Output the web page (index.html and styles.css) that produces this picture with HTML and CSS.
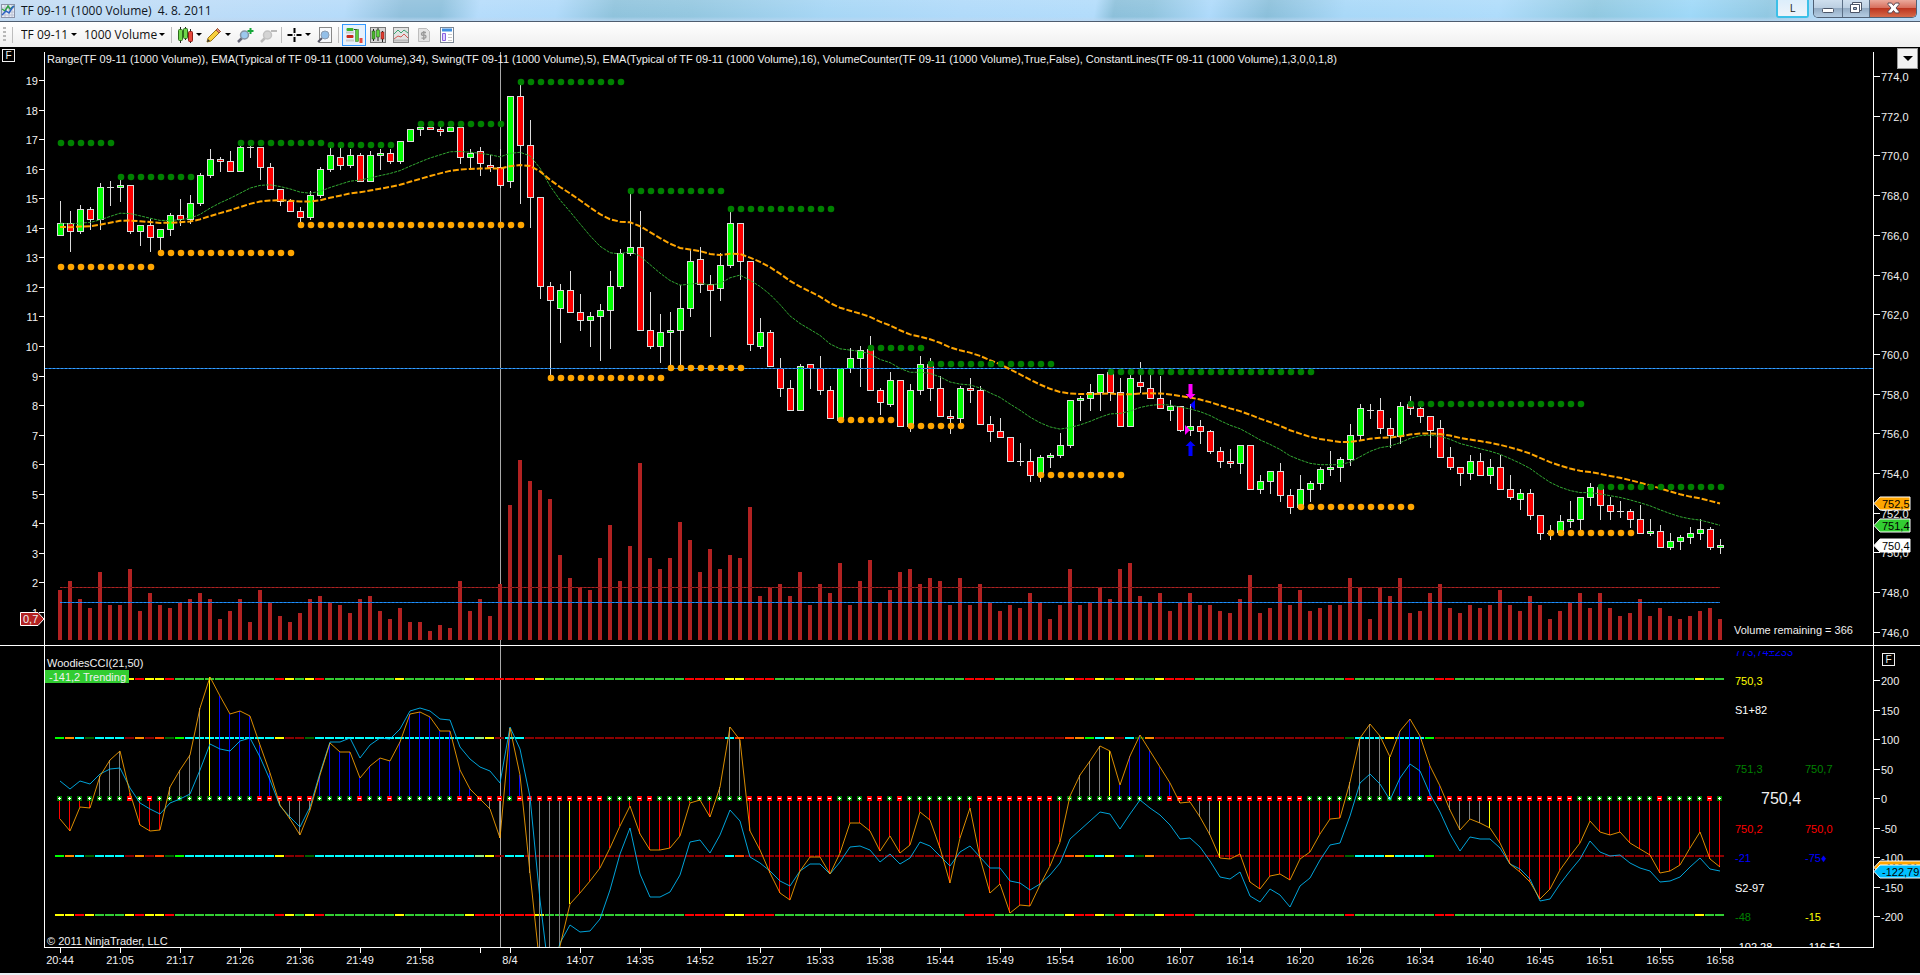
FILE: index.html
```html
<!DOCTYPE html>
<html lang="en">
<head>
<meta charset="utf-8">
<title>TF 09-11 (1000 Volume) 4. 8. 2011</title>
<link rel="stylesheet" href="styles.css">
</head>
<body>
<header class="titlebar">
  <svg class="app-icon" width="14" height="14" viewBox="0 0 14 14"><rect x=".5" y=".5" width="13" height="13" fill="#e9edf6" stroke="#8b93a8"/><path d="M4 1v12M8 1v12M11 1v12M1 4h12M1 8h12M1 11h12" stroke="#b9c0d2"/><path d="M1 5l3 2 3-5 2 3 4-3" fill="none" stroke="#2fa044" stroke-width="1.5"/><path d="M1 11l4-4 3 2 3-5 2-2" fill="none" stroke="#2b62c4" stroke-width="1.5"/></svg>
  <h1 class="title">TF 09-11 (1000 Volume)&nbsp; 4. 8. 2011</h1>
  <button class="link-button" type="button">L</button>
  <div class="window-buttons">
    <button class="win" type="button" aria-label="Minimize"><svg width="28" height="16" viewBox="0 0 28 16"><rect x="8.500" y="8.500" width="11" height="4" rx="1" fill="#fff" stroke="#4b5568"/></svg></button>
    <button class="win" type="button" aria-label="Restore"><svg width="26" height="16" viewBox="0 0 26 16"><path d="M9.500 2.500h9v8h-9z" fill="#fff" stroke="#4b5568"/><path d="M7.500 4.500h9v8h-9z" fill="#fff" stroke="#4b5568"/><path d="M10.500 7.500h3v2h-3z" fill="#9fb4cc" stroke="#4b5568"/></svg></button>
    <button class="win close" type="button" aria-label="Close"><svg width="46" height="16" viewBox="0 0 46 16"><path d="M18 3h3.500l2 2.500L25.500 3H29v1.500L26 8l3 3.500V13h-3.500l-2-2.500-2 2.500H18v-1.500L21 8l-3-3.500z" fill="#fff" stroke="#5a4a55"/></svg></button>
  </div>
</header>

<nav class="toolbar" aria-label="Chart tools">
  <span class="grip"></span>
  <span class="sep"></span>
  <label class="drop instrument"><select aria-label="Instrument"><option>TF 09-11</option></select><i class="caret"></i></label>
  <label class="drop interval"><select aria-label="Interval"><option>1000 Volume</option></select><i class="caret"></i></label>
  <span class="sep"></span>
  <button class="tool" type="button" aria-label="Chart style"><svg width="16" height="16" viewBox="0 0 16 16"><path d="M3.500 0v16M8.500 0v13M13.500 2v14" stroke="#222"/><rect x="1.500" y="2.500" width="4" height="11" rx="1" fill="#6fd64a" stroke="#2c6b1c"/><rect x="6.500" y="1.500" width="4" height="10" rx="1" fill="#6fd64a" stroke="#2c6b1c"/><rect x="11.500" y="4.500" width="4" height="10" rx="1" fill="#e8483c" stroke="#8e1d16"/></svg><i class="caret"></i></button>
  <button class="tool" type="button" aria-label="Drawing tools"><svg width="16" height="16" viewBox="0 0 16 16"><path d="M1 15l1-4L11.500 1.500l3 3L5 14z" fill="#f8cf3c" stroke="#9a7418"/><path d="M10 3l1.500-1.500 3 3L13 6z" fill="#e88a6a" stroke="#9a5238"/><path d="M1 15l1-3 2 2z" fill="#333"/></svg><i class="caret"></i></button>
  <button class="tool" type="button" aria-label="Zoom in"><svg width="18" height="16" viewBox="0 0 18 16"><path d="M2 15l4-4" stroke="#667" stroke-width="2.500"/><circle cx="8.500" cy="8" r="4" fill="#9cc8ee" stroke="#8694a5" stroke-width="1.500"/><path d="M14.500 1v6M11.500 4h6" stroke="#17a83a" stroke-width="2"/></svg></button>
  <button class="tool" type="button" aria-label="Zoom out" disabled><svg width="18" height="16" viewBox="0 0 18 16"><path d="M2 15l4-4" stroke="#bbb" stroke-width="2.500"/><circle cx="8.500" cy="8" r="4" fill="#d4d4d4" stroke="#c2c2c2" stroke-width="1.500"/><path d="M12 4h6" stroke="#bbb" stroke-width="2"/></svg></button>
  <span class="sep"></span>
  <button class="tool" type="button" aria-label="Cross hair"><svg width="15" height="16" viewBox="0 0 15 16"><path d="M7.500 1v5M7.500 10v5M.5 8h5M9.500 8h5" stroke="#000" stroke-width="2"/><path d="M7 7.500h1v1H7z"/></svg><i class="caret"></i></button>
  <button class="tool" type="button" aria-label="Data box"><svg width="16" height="16" viewBox="0 0 16 16"><rect x="2.500" y=".5" width="12" height="15" fill="#f7f9fc" stroke="#888"/><path d="M1 15l4-4" stroke="#556" stroke-width="2"/><circle cx="8" cy="8" r="4" fill="#93bfe8" stroke="#8c9cb0"/></svg></button>
  <span class="sep"></span>
  <button class="tool active" type="button" aria-label="Chart trader" aria-pressed="true"><svg width="18" height="18" viewBox="0 0 18 18"><path d="M1 6.500h8M1 14.500h8" stroke="#c9c9c9" stroke-width="2"/><rect x="1.500" y="2" width="7" height="3" rx="1" fill="#39b52a"/><rect x="1.500" y="9" width="7" height="3" rx="1" fill="#c9281c"/><path d="M9 3.500h3" stroke="#333"/><rect x="10.500" y="3.500" width="3" height="12" fill="#5fce3c" stroke="#2c6b1c" stroke-width=".5"/><rect x="14.500" y="12" width="3" height="5" fill="#e8483c"/></svg></button>
  <button class="tool" type="button" aria-label="Chart trader panel"><svg width="16" height="16" viewBox="0 0 16 16"><rect x=".5" y=".5" width="15" height="15" fill="#d6d6d6" stroke="#777"/><path d="M3.500 2v12M8 1v13M12.500 4v11" stroke="#222"/><rect x="2" y="4" width="3" height="8" fill="#4cb62f" stroke="#1d4d12" stroke-width=".5"/><rect x="6.500" y="3" width="3" height="7" fill="#5ed43c" stroke="#1d4d12" stroke-width=".5"/><rect x="11" y="5" width="3" height="7" fill="#e23c30" stroke="#6b1510" stroke-width=".5"/></svg></button>
  <button class="tool" type="button" aria-label="Indicators"><svg width="16" height="16" viewBox="0 0 16 16"><rect x=".5" y=".5" width="15" height="15" fill="#e2e2e2" stroke="#8a8a8a"/><path d="M1 12.500h14v2H1z" fill="#bbb"/><path d="M1 7l4-4 3 3 3-3 4 3" fill="none" stroke="#3ba573"/><path d="M1 12l4-3 3 1 3-3 4 4" fill="none" stroke="#d45a55"/></svg></button>
  <button class="tool" type="button" aria-label="Strategies" disabled><svg width="16" height="16" viewBox="0 0 16 16"><path d="M2.500 1.500h8l3 3v10h-11z" fill="#e4e4e4" stroke="#bdbdbd"/><path d="M10 5.500H7Q5.500 5.500 5.500 7T7 8.200h1.500q1.500.1 1.500 1.500t-1.500 1.400H5.500M7.800 4v9" fill="none" stroke="#999" stroke-width="1.300"/></svg></button>
  <button class="tool" type="button" aria-label="Properties"><svg width="16" height="16" viewBox="0 0 16 16"><rect x="1.500" y=".5" width="13" height="15" fill="#fff" stroke="#7c8794"/><path d="M3 3h10" stroke="#3f8fe0" stroke-width="3"/><path d="M3.500 6.500h3v7h-3z" fill="#ddd0ff" stroke="#8a62e0"/><path d="M9 7.500h4M9 10.500h4M9 13.500h4" stroke="#c8c8c8"/></svg></button>
</nav>

<main class="chart" id="chart">
  <svg class="plot" id="plot" role="img" aria-label="Price, volume and CCI panes"></svg>
  <p class="caption">Range(TF 09-11 (1000 Volume)), EMA(Typical of TF 09-11 (1000 Volume),34), Swing(TF 09-11 (1000 Volume),5), EMA(Typical of TF 09-11 (1000 Volume),16), VolumeCounter(TF 09-11 (1000 Volume),True,False), ConstantLines(TF 09-11 (1000 Volume),1,3,0,0,1,8)</p>
  <button class="fix fix-left" type="button" aria-label="Fixed scale, left axis">F</button>
  <button class="fix fix-right" type="button" aria-label="Fixed scale, lower pane">F</button>
  <button class="menu" type="button" aria-label="Chart menu"><i class="caret big"></i></button>
</main>
<script src="chart.js"></script>
</body>
</html>
```
FILE: styles.css
```css
* { box-sizing: border-box; }

body {
  margin: 0;
  height: 100vh;
  display: flex;
  flex-direction: column;
  overflow: hidden;
  background: #e8eef5;
  font-family: "Liberation Sans", Arial, sans-serif;
  font-size: 11px;
}

button, select { font: inherit; color: inherit; margin: 0; padding: 0; border: 0; background: none; }

.titlebar {
  flex: none;
  display: flex;
  align-items: flex-start;
  height: 22px;
  padding: 0 3px 0 1px;
  border-bottom: 1px solid #4e5d70;
  background:
    linear-gradient(rgba(255, 255, 255, .1), rgba(255, 255, 255, 0) 80%, rgba(190, 215, 240, .8)),
    linear-gradient(100deg, #c5dcf2 0, #bcdcf8 11%, #b5dbfa 18%, #90c0dc 21%, #8dc0dc 23%, #b5dcfb 25%, #b0dafa 29%, #8fc3dc 32%, #93c7e0 36%, #a6d6f5 43%, #b0dafa 50%, #b2dcfb 57%, #8cc0da 58%, #90c4de 60%, #aedafb 63%, #8abfda 66%, #a8d8f8 70%, #aedcfb 78%, #90c8e0 83%, #9ed8f8 88%, #90c8e2 92%, #b8dcfa 95%, #b8dcf8 100%);
}
.app-icon { margin-top: 4px; }
.title {
  margin: 0 auto 0 6px;
  font: 12px/22px "Open Sans", "Noto Sans", sans-serif;
  color: #10161e;
}
.link-button {
  width: 33px;
  height: 18px;
  margin-right: 4px;
  border: 2px solid #3cc0e8;
  border-top: 0;
  border-radius: 0 0 3px 3px;
  background: linear-gradient(#dceefb, #eef4fa);
  color: #222;
  font: 11px/16px "Open Sans", sans-serif;
}
.window-buttons {
  display: flex;
  height: 18px;
  border: 1px solid #4f6075;
  border-top: 0;
  border-radius: 0 0 5px 5px;
  overflow: hidden;
}
.win {
  display: flex;
  border-right: 1px solid #5b6f86;
  background: linear-gradient(#cfdfee 0, #bccfe2 45%, #94acc4 50%, #b4cce2 100%);
}
.win.close {
  border-right: 0;
  background: linear-gradient(#eba99c 0, #d8705e 45%, #bd3620 50%, #d66a4a 100%);
}

.toolbar {
  flex: none;
  display: flex;
  align-items: center;
  height: 25px;
  padding-left: 3px;
  background: linear-gradient(#fff, #efefef);
  color: #111;
  font-family: "Open Sans", "Noto Sans", sans-serif;
  font-size: 12px;
}
.grip { width: 3px; height: 15px; background: repeating-linear-gradient(#b8b8b8 0 2px, transparent 2px 4px); }
.sep { width: 1px; height: 16px; margin: 0 3px 0 2px; background: #bdbdbd; }
.grip + .sep { margin: 0 8px 0 6px; }
.drop { display: flex; align-items: center; height: 22px; }
.drop select { appearance: none; height: 20px; line-height: 20px; }
.instrument { width: 63px; }
.instrument select { width: 50px; }
.interval { width: 85px; }
.interval select { width: 75px; }
.caret { width: 0; height: 0; border: 3px solid transparent; border-top-color: #000; border-bottom: 0; }
.caret.big { border-width: 5px; border-bottom: 0; }
.tool { display: flex; align-items: center; justify-content: center; gap: 3px; height: 22px; min-width: 23px; padding: 0 2px; }
.tool.active { border: 1px solid #3399ff; background: #e6f1fc; }

.chart { position: relative; flex: 1; min-height: 0; margin-bottom: 2px; background: #000; color: #f0f0f0; }
.plot { display: block; position: absolute; width: 100%; height: 100%; }
.plot text { font: 11px "Liberation Sans", Arial, sans-serif; fill: #f0f0f0; white-space: pre; }
.plot text.last { font-size: 16px; }
.caption { position: absolute; left: 47px; top: 5px; margin: 0; font-size: 11px; line-height: 14px; white-space: nowrap; }
.fix { position: absolute; width: 13px; height: 13px; border: 1px solid #f0f0f0; background: #000; color: #f0f0f0; font-size: 10px; line-height: 11px; text-align: center; }
.fix-left { left: 2px; top: 2px; }
.fix-right { right: 25px; top: 606px; }
.menu { position: absolute; right: 2px; top: 1px; width: 21px; height: 21px; display: grid; place-items: center; border: 1px solid #999; background: #f2f2f2; }
```
FILE: chart.js
```js
// Bars: colour (g up, r down, d doji), then high, open/close edges and low in plot units.
const bars = `g201,223,236,236 r211,223,232,252 g205,209,232,234 r207,209,220,230 g183,187,220,230 d181,187,188,206 g179,185,188,202 r185,185,232,234 g225,225,232,246 r219,225,238,252
g229,229,238,252 g213,215,230,236 r199,215,220,226 g195,203,220,224 g173,175,204,206 g149,159,176,178 r157,159,162,172 r151,161,172,172 g145,147,172,172 d144,147,148,158
r147,147,168,180 r163,167,190,190 r189,189,202,206 r199,201,212,212 r207,211,218,223 g191,195,218,220 g167,169,196,198 g147,155,170,172 r147,157,166,170 g149,155,166,168
r153,155,182,182 g151,155,182,182 g149,153,156,170 r149,153,162,164 g141,141,162,164 g129,129,142,142 g127,127,130,136 r127,127,130,130 r127,129,132,136 g127,127,132,132
r127,127,158,164 g149,153,158,169 r147,151,164,176 r155,165,168,172 r149,167,186,188 g96,96,182,188 r85,96,146,204 r120,145,198,228 r197,197,287,299 r282,286,301,375
g284,290,309,343 r271,290,313,313 r294,312,321,331 g312,316,321,347 g304,310,317,361 g271,286,311,349 g249,253,287,289 g193,247,254,256 r211,247,331,331 r292,330,347,349
g314,332,347,363 g312,330,333,367 g285,308,331,367 g250,261,309,317 r247,259,285,293 r275,284,291,337 g253,265,289,301 g212,223,266,268 r223,223,262,280 r261,261,345,351
g318,332,347,349 r330,332,367,367 r358,368,389,397 r380,388,411,411 g364,366,411,411 r364,364,369,389 r356,368,391,395 r386,390,419,419 g368,368,421,421 g348,358,369,373
g346,350,359,387 r336,349,391,391 r388,390,403,415 g372,380,405,407 r380,380,427,427 g384,390,427,432 g356,364,391,395 r358,364,389,401 r376,388,417,417 r410,416,419,434
g386,388,419,426 r378,388,391,403 r386,390,425,425 r416,424,432,442 r418,431,438,438 r437,437,462,462 d443,461,462,466 r449,461,476,482 g455,457,476,482 g453,455,458,468
g433,445,456,458 g400,400,446,448 g396,398,401,421 g384,392,399,411 g374,374,393,411 r372,372,393,401 r378,392,427,427 g374,378,427,427 r362,382,387,393 r374,388,399,399
r376,398,409,409 g400,406,411,421 r406,406,431,432 g404,426,431,436 r420,426,432,444 r430,431,452,454 r447,451,462,468 r449,461,464,468 g445,445,464,474 r445,445,490,490
g475,481,490,494 g471,471,482,494 r463,471,496,502 r489,495,508,514 g475,489,508,508 g481,483,490,502 g467,469,484,490 g451,467,470,476 g457,459,468,482 g424,435,460,466
g404,408,436,440 d404,410,411,419 r398,410,429,434 r418,428,436,448 g402,406,437,444 r396,404,409,415 r407,408,417,423 r416,416,431,448 r420,428,458,458 r447,457,468,470
r467,467,474,486 g455,461,474,480 r453,461,476,476 g459,467,476,484 r455,467,490,490 r475,489,498,500 g489,493,500,510 r489,493,516,520 r515,515,534,540 d525,533,534,540
g515,521,533,533 g501,519,522,528 g497,497,520,532 g483,487,498,506 r487,487,506,520 r497,505,512,520 d501,511,512,518 r509,511,520,528 r505,519,534,534 g519,531,534,536
r525,531,548,548 g533,541,548,550 g535,537,542,550 g527,533,538,544 g519,529,534,540 r527,529,548,550 g539,545,548,554`
  .trim().split(/\s+/).map(s => {
    const [high, top, bottom, low] = s.slice(1).split(',').map(Number);
    return { kind: s[0], high, top, bottom, low };
  });

const nums = s => s.trim().split(/\s+/).map(Number);
const volume = nums(`590 581 599 608 572 605 605 569 611 593 605 608 602 599 593 599 619 611 599 622 590 602 616 622 613 599 596 602 605 613
599 596 611 619 608 622 622 631 625 628 581 611 599 616 584 505 460 481 490 499 555 578 587 590 558 525 581 546 463 558
569 558 522 540 572 549 569 555 558 507 596 587 584 596 572 605 584 593 563 605 581 560 602 590 572 569 584 578 581 605
578 605 584 602 611 605 608 593 602 619 605 569 605 602 587 599 569 563 596 602 593 611 602 593 605 605 611 613 599 575
613 608 584 605 590 611 608 605 605 578 587 619 587 596 578 613 611 593 584 608 613 605 608 605 590 605 611 596 605 619
611 602 593 608 593 608 616 613 599 616 608 616 619 616 611 608 619`);
const cci = nums(`819 831 807 808 776 760 751 793 825 831 830 787 770 755 708 677 696 714 711 716 745 773 805 819 835 810 775 743 752 752
778 766 758 761 742 714 712 717 731 731 770 789 799 809 838 728 775 873 967 1020 946 904 893 881 868 848 826 806 834 850
850 848 836 803 800 817 787 727 740 831 850 873 893 900 871 857 857 874 853 823 823 831 851 836 853 845 812 820 848 883
838 808 858 893 884 913 905 906 885 866 842 796 775 761 746 751 785 756 735 751 767 783 803 802 817 835 858 859 854 882
889 876 874 880 859 852 834 819 818 782 738 724 736 757 731 719 736 766 786 810 830 819 823 828 843 864 872 882 899 889
870 856 843 821 832 835 832 843 849 855 873 871 865 848 832 859 867`);
const turbo = nums(`781 789 781 784 774 769 768 788 803 809 814 803 799 794 770 744 749 751 741 738 757 780 806 817 827 807 773 742 742 738
758 745 738 739 729 711 708 711 719 720 747 759 767 771 783 727 749 797 900 983 943 925 932 931 919 890 854 828 874 897
897 892 875 842 840 853 835 810 821 857 863 871 881 886 871 864 864 874 862 847 846 850 862 854 864 858 842 846 856 866
852 846 857 868 868 881 883 890 884 875 863 839 830 821 812 814 829 814 800 808 815 825 839 838 847 861 877 879 872 896
902 889 895 907 886 878 860 845 843 816 783 774 784 800 778 764 771 794 812 834 851 837 839 839 848 864 869 879 901 899
884 871 859 841 852 856 855 863 868 871 882 881 877 867 858 869 871`);

// Run-length strings: a count followed by a colour key.
const runs = s => [...s.matchAll(/(\d+)([a-zA-Z+-])/g)].flatMap(m => Array(+m[1]).fill(m[2]));
const histogram = runs('4r3g4r4g1y6b4g16b3g2b4g1y14r3g32r4g1y6b4g1y12r4g1y5b4g1y23r');
const slope = runs('7+1-1+1-10+6-4+1-2+1-6+5-1+9-3+2-9+9-3+2-1+1-7+8-11+14-12+15-8+1-4+1-1+');
const outer = runs('2Y1R1Y3G1Y1R2Y1R10G1R1Y1G1Y1R7G1Y6G1Y6R1Y14G4R2Y3R19G3R7G1Y2R1Y1G1R1Y2G1Y3R15G1R8G2R24G1Y2G');
const inner = runs('1L1O1C1D3C1M1O1M1T1D1L9C1Y2M1D16C1P1Y1M2C20M1C1T32M1T1O1L1C1Y1M1C1D1O19M1D3C1Y3C1L29M');
const colour = {
  r: '#f00', g: '#808080', b: '#00f', y: '#ff0',
  Y: '#ff0', R: '#f00', G: '#32cd32', L: '#0f0', O: '#ff8c00', C: '#0ff',
  D: '#006400', M: '#8b0000', T: '#ff4500', P: '#90ee90'
};

// Swing levels: first bar, last bar, level.
const swingHigh = [[0, 5, 143], [6, 13, 177], [18, 26, 143], [27, 33, 145], [36, 44, 124], [46, 56, 82], [57, 66, 191], [67, 77, 209], [81, 86, 348], [87, 99, 364], [105, 125, 372], [135, 152, 404], [154, 166, 487]];
const swingLow = [[0, 9, 267], [10, 23, 253], [24, 46, 225], [49, 60, 378], [61, 68, 368], [78, 83, 420], [85, 90, 426], [98, 106, 475], [124, 135, 507], [149, 157, 533]];
const times = '20:44 21:05 21:17 21:26 21:36 21:49 21:58'.split(' ').map((t, k) => [k * 6, t])
  .concat([[42, ''], [45, '8/4']])
  .concat('14:07 14:35 14:52 15:27 15:33 15:38 15:44 15:49 15:54 16:00 16:07 16:14 16:20 16:26 16:34 16:40 16:45 16:51 16:55 16:58'.split(' ').map((t, k) => [52 + k * 6, t]));

function ema(period, start) {
  const a = 2 / (period + 1);
  let value = start;
  return bars.map((b, i) => {
    const close = b.kind === 'r' ? b.bottom - 1 : b.top;
    if (i) value += a * ((b.high + b.low + close) / 3 - value);
    return value;
  });
}

const svg = document.getElementById('plot');

function draw() {
  const W = svg.clientWidth, H = svg.clientHeight;
  const ky = H / 926, step = (W - 260) / 166, right = W - 47;
  const x = i => Math.round(60 + i * step), y = v => Math.round((v - 47) * ky);
  const out = [];
  const rect = (rx, ry, w, h, fill) => out.push(`<rect x="${rx}" y="${ry}" width="${w}" height="${h}" fill="${fill}"/>`);
  const text = (tx, ty, s, o = '') => out.push(`<text x="${tx}" y="${ty}" ${o}>${s}</text>`);
  const dash = (x1, x2, v, c, under) => {
    rect(x1, y(v), x2 - x1, 1, under);
    out.push(`<path d="M${x1} ${y(v) + .5}H${x2}" stroke="${c}" stroke-dasharray="2 2"/>`);
  };
  const line = (values, attrs) => out.push(`<polyline fill="none" points="${values.map((v, i) => x(i) + ',' + ((v - 47) * ky).toFixed(1)).join(' ')}" ${attrs}/>`);

  out.push(`<defs><clipPath id="low"><rect x="45" y="${y(651)}" width="${right - 45}" height="${y(947) - y(651)}"/></clipPath></defs>`);

  // price pane
  rect(x(44), y(52), 1, y(947) - y(52), '#a9a9a9');
  volume.forEach((v, i) => rect(x(i) - 2, y(v), 4, y(640) - y(v), '#b22222'));
  dash(x(0), x(166), 587, '#b22222', '#7c1c1c');
  dash(x(0), x(166), 602, '#1e90ff', '#1670c8');
  bars.forEach((b, i) => {
    rect(x(i), y(b.high), 1, Math.max(1, y(b.low) - y(b.high)), '#dcdcdc');
    if (b.kind === 'd') rect(x(i) - 3, y(b.top), 7, 1, '#dcdcdc');
    else {
      rect(x(i) - 3, y(b.top), 7, y(b.bottom) - y(b.top), '#dcdcdc');
      rect(x(i) - 2, y(b.top) + 1, 5, Math.max(1, y(b.bottom) - y(b.top) - 2), b.kind === 'g' ? '#0f0' : '#f00');
    }
  });
  dash(45, right, 368, '#3ba0ff', '#1670c8');
  const dots = (list, c) => list.forEach(([a, b, v]) => {
    for (let i = a; i <= b; i++) out.push(`<circle cx="${x(i) + 1}" cy="${y(v)}" r="3.300" fill="${c}"/>`);
  });
  line(ema(16, 223), 'stroke="#32a832" stroke-dasharray="3 1"');
  line(ema(34, 227), 'stroke="#ffa500" stroke-width="2" stroke-dasharray="6 2"');
  dots(swingHigh, '#008000');
  dots(swingLow, '#ffa500');
  const t = x(113), arrow = (v, d, c) => out.push(`<path transform="translate(${t + .5} ${y(v)})" d="M0 0l-5 ${-5 * d}h3v${-10 * d}h4v${10 * d}h3z" fill="${c}"/>`);
  arrow(399, 1, '#f0f');
  arrow(441, -1, '#00f');
  out.push(`<path d="M${t} ${y(405)}l5-5v10z" fill="#00f"/><path d="M${t} ${y(430)}l-5-5v10z" fill="#f0f"/>`);

  // CCI pane
  const zero = y(798);
  out.push('<g clip-path="url(#low)">');
  outer.forEach((c, i) => { rect(x(i) - 5, y(678), 9, 2, colour[c]); rect(x(i) - 5, y(914), 9, 2, colour[c]); });
  inner.forEach((c, i) => { rect(x(i) - 5, y(737), 9, 2, colour[c]); rect(x(i) - 5, y(855), 9, 2, colour[c]); });
  histogram.forEach((c, i) => {
    const v = y(cci[i]);
    rect(x(i) - 1, Math.min(v, zero), 1, Math.abs(v - zero), colour[c]);
  });
  slope.forEach((s, i) => {
    const c = x(i) - 1;
    rect(c - 2, zero - 2, 5, 5, s === '+' ? '#008000' : '#f00');
    rect(c - 1, zero, 3, 1, '#fff');
    if (s === '+') rect(c, zero - 1, 1, 3, '#fff');
  });
  line(turbo, 'stroke="#00bfff" stroke-opacity=".85"');
  line(cci, 'stroke="#ffa500" stroke-opacity=".85"');
  const c1 = W - 185, c2 = W - 115;
  [[c1, 656, '773,74±233', '#00f'], [c1, 685, '750,3', '#ff0'], [c1, 714, 'S1+82', '#fff'],
   [c1, 773, '751,3', '#008000'], [c2, 773, '750,7', '#008000'], [c1, 833, '750,2', '#f00'], [c2, 833, '750,0', '#f00'],
   [c1, 862, '-21', '#00f'], [c2, 862, '-75♦', '#00f'], [c1, 892, 'S2-97', '#fff'],
   [c1, 921, '-48', '#008000'], [c2, 921, '-15', '#ff0'], [c1, 951, '-102,28', '#fff'], [c2, 951, '-116,51', '#fff']]
    .forEach(([tx, ty, s, c]) => text(tx, y(ty), s, `style="fill:${c}"`));
  out.push('</g>');
  text(W - 159, y(804), '750,4', 'class="last"');

  // frame and scales
  rect(44, y(52), 1, y(948) - y(52), '#fff');
  rect(right, y(52), 1, y(948) - y(52), '#fff');
  rect(44, y(947), right - 43, 1, '#fff');
  rect(0, y(645), W, 1, '#fff');
  for (let n = 1; n <= 19; n++) {
    const v = 80 + (19 - n) * 29.55;
    rect(39, y(v), 5, 1, '#fff');
    text(38, y(v + 5), n, 'text-anchor="end"');
  }
  for (let p = 774, v = 76; p >= 746; p -= 2, v += 39.7) {
    rect(right + 1, y(v), 6, 1, '#fff');
    text(right + 8, y(v + 5), p + ',0');
  }
  for (let n = 200, v = 680; n >= -200; n -= 50, v += 29.5) {
    rect(right + 1, y(v), 6, 1, '#fff');
    text(right + 8, y(v + 5), n);
  }
  times.forEach(([i, s]) => {
    rect(x(i), y(948), 1, 5, '#fff');
    text(x(i), y(964), s, 'text-anchor="middle"');
  });
  const tag = (v, w, s, c) => {
    out.push(`<path d="M${right + 1} ${y(v) + .5}l6-6.500h${w}v13h-${w}z" fill="${c}" stroke="#fff"/>`);
    text(right + 9, y(v) + 5, s, 'style="fill:#000"');
  };
  tag(503, 30, '752,5', '#ffa500');
  tag(525, 30, '751,4', '#32cd32');
  tag(545, 30, '750,4', '#fff');
  tag(867, 42, '-118,81', '#ffa500');
  tag(871, 42, '-122,79', '#00bfff');
  out.push(`<path d="M44 ${y(619)}l-6-6.500H20.500v13H38z" fill="#b22222" stroke="#fff"/>`);
  text(23, y(619) + 4, '0,7');

  // notes
  text(47, y(667), 'WoodiesCCI(21,50)');
  rect(45, y(670), 84, 13, '#32cd32');
  text(49, y(681), '-141,2 Trending');
  text(47, y(945), '© 2011 NinjaTrader, LLC');
  text(W - 186, y(634), 'Volume remaining = 366');
  svg.innerHTML = out.join('');
}

draw();
addEventListener('resize', draw);
```
